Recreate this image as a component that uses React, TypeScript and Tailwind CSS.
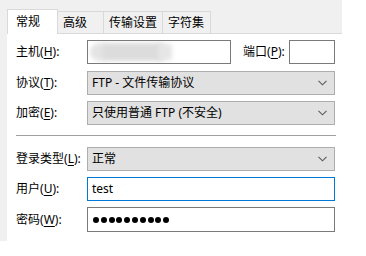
import React from 'react';

function Label({ text, k, width = 'w-[72px]' }: { text: string; k: string; width?: string }) {
    return (
        <div className={`${width} shrink-0 text-[12px] text-black leading-none`}>
            {text}(<span className="underline underline-offset-[2px]">{k}</span>):
        </div>
    );
}

function Chevron() {
    return (
        <svg width="9" height="6" viewBox="0 0 9 6" className="shrink-0">
            <polyline points="0.5,0.8 4.5,4.8 8.5,0.8" fill="none" stroke="#5a5a5a" strokeWidth="1.1" />
        </svg>
    );
}

function Select({ value }: { value: string }) {
    return (
        <div className="w-[248px] h-[24px] border border-[#adadad] bg-[#e1e1e1] flex items-center pl-[4px] pr-[7px]">
            <span className="flex-1 text-[12px] text-black leading-none">{value}</span>
            <Chevron />
        </div>
    );
}

export default function App() {
    const tabs = [
        { name: '高级', w: 'w-[46px]' },
        { name: '传输设置', w: 'w-[59px]' },
        { name: '字符集', w: 'w-[48px]' },
    ];

    return (
        <div className="w-[366px] h-[256px] bg-white font-['Noto_Sans','Noto_Sans_CJK_SC',sans-serif]">
            <div className="w-[342px] h-[241px] bg-[#f0f0f0] pl-[7px] flex flex-col">
                {/* tab strip */}
                <div className="h-[34px] flex items-end border-b border-[#d9d9d9]">
                    <div className="w-[51px] h-[25px] bg-white border border-b-0 border-[#d9d9d9] mb-[-1px] relative z-10 flex items-center pl-[8px] text-[12px] text-black">
                        常规
                    </div>
                    {tabs.map(t => (
                        <div
                            key={t.name}
                            className={`${t.w} h-[22px] bg-[#f0f0f0] border-t border-r border-[#d9d9d9] flex items-center pl-[5px] text-[12px] text-black`}
                        >
                            {t.name}
                        </div>
                    ))}
                </div>

                {/* panel */}
                <div className="flex-1 bg-white pl-[9px] flex flex-col">
                    <div className="mt-[6px] flex items-center">
                        <Label text="主机" k="H" width="w-[71px]" />
                        <div className="w-[144px] h-[24px] border border-[#7a7a7a] bg-white relative overflow-hidden">
                            <div className="absolute left-[2px] top-[2px] w-[18px] h-[18px] rounded-full bg-[#e4e4e4] blur-[2px]" />
                            <div className="absolute left-[14px] top-[2px] w-[62px] h-[18px] bg-[#dcdcdc] blur-[2px]" />
                            <div className="absolute left-[70px] top-[3px] w-[14px] h-[16px] bg-[#e6e6e6] blur-[2px]" />
                        </div>
                        <div className="ml-[12px]">
                            <Label text="端口" k="P" width="w-[46px]" />
                        </div>
                        <div className="w-[46px] h-[24px] border border-[#7a7a7a] bg-white" />
                    </div>

                    <div className="mt-[7px] flex items-center">
                        <Label text="协议" k="T" width="w-[71px]" />
                        <Select value="FTP - 文件传输协议" />
                    </div>

                    <div className="mt-[6px] flex items-center">
                        <Label text="加密" k="E" width="w-[71px]" />
                        <Select value="只使用普通 FTP (不安全)" />
                    </div>

                    <div className="mt-[10px] w-[320px] h-px bg-[#a0a0a0]" />

                    <div className="mt-[11px] flex items-center">
                        <Label text="登录类型" k="L" width="w-[71px]" />
                        <Select value="正常" />
                    </div>

                    <div className="mt-[6px] flex items-center">
                        <Label text="用户" k="U" width="w-[71px]" />
                        <div className="w-[248px] h-[24px] border border-[#0078d7] bg-white flex items-center pl-[4px] text-[12px] text-black leading-none">
                            test
                        </div>
                    </div>

                    <div className="mt-[6px] flex items-center">
                        <Label text="密码" k="W" width="w-[71px]" />
                        <div className="w-[248px] h-[25px] border border-[#7a7a7a] bg-white flex items-center pl-[5px] gap-[1.8px]">
                            {Array.from({ length: 10 }).map((_, i) => (
                                <div key={i} className="w-[6px] h-[6px] rounded-full bg-black" />
                            ))}
                        </div>
                    </div>
                </div>
            </div>
        </div>
    );
}
